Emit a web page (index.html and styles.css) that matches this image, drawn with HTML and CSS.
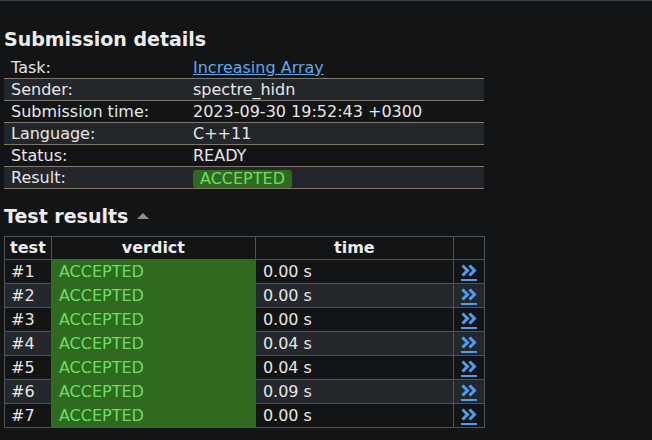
FILE: index.html
```html
<!DOCTYPE html>
<html>
<head>
<meta charset="utf-8">
<link rel="stylesheet" href="styles.css">
</head>
<body>
<div class="topline"></div>
<main class="content">
  <h2 class="heading">Submission details</h2>
  <table class="details">
    <tr><td class="label">Task:</td><td><a class="task-link" href="#">Increasing Array</a></td></tr>
    <tr><td class="label">Sender:</td><td>spectre_hidn</td></tr>
    <tr><td class="label">Submission time:</td><td>2023-09-30 19:52:43 +0300</td></tr>
    <tr><td class="label">Language:</td><td>C++11</td></tr>
    <tr><td class="label">Status:</td><td>READY</td></tr>
    <tr><td class="label">Result:</td><td><span class="badge">ACCEPTED</span></td></tr>
  </table>

  <h2 class="heading heading-tests">Test results <span class="caret"></span></h2>
  <table class="tests">
    <thead>
      <tr><th class="c-test">test</th><th class="c-verdict">verdict</th><th class="c-time">time</th><th class="c-link"></th></tr>
    </thead>
    <tbody>
      <tr><td>#1</td><td class="verdict">ACCEPTED</td><td>0.00 s</td><td class="link"><a href="#" class="more"><svg width="16" height="13" viewBox="0 0 16 13"><path d="M1.5 1.5 L6.5 6.5 L1.5 11.5 M8.5 1.5 L13.5 6.5 L8.5 11.5" fill="none" stroke="currentColor" stroke-width="3"/></svg></a></td></tr>
      <tr><td>#2</td><td class="verdict">ACCEPTED</td><td>0.00 s</td><td class="link"><a href="#" class="more"><svg width="16" height="13" viewBox="0 0 16 13"><path d="M1.5 1.5 L6.5 6.5 L1.5 11.5 M8.5 1.5 L13.5 6.5 L8.5 11.5" fill="none" stroke="currentColor" stroke-width="3"/></svg></a></td></tr>
      <tr><td>#3</td><td class="verdict">ACCEPTED</td><td>0.00 s</td><td class="link"><a href="#" class="more"><svg width="16" height="13" viewBox="0 0 16 13"><path d="M1.5 1.5 L6.5 6.5 L1.5 11.5 M8.5 1.5 L13.5 6.5 L8.5 11.5" fill="none" stroke="currentColor" stroke-width="3"/></svg></a></td></tr>
      <tr><td>#4</td><td class="verdict">ACCEPTED</td><td>0.04 s</td><td class="link"><a href="#" class="more"><svg width="16" height="13" viewBox="0 0 16 13"><path d="M1.5 1.5 L6.5 6.5 L1.5 11.5 M8.5 1.5 L13.5 6.5 L8.5 11.5" fill="none" stroke="currentColor" stroke-width="3"/></svg></a></td></tr>
      <tr><td>#5</td><td class="verdict">ACCEPTED</td><td>0.04 s</td><td class="link"><a href="#" class="more"><svg width="16" height="13" viewBox="0 0 16 13"><path d="M1.5 1.5 L6.5 6.5 L1.5 11.5 M8.5 1.5 L13.5 6.5 L8.5 11.5" fill="none" stroke="currentColor" stroke-width="3"/></svg></a></td></tr>
      <tr><td>#6</td><td class="verdict">ACCEPTED</td><td>0.09 s</td><td class="link"><a href="#" class="more"><svg width="16" height="13" viewBox="0 0 16 13"><path d="M1.5 1.5 L6.5 6.5 L1.5 11.5 M8.5 1.5 L13.5 6.5 L8.5 11.5" fill="none" stroke="currentColor" stroke-width="3"/></svg></a></td></tr>
      <tr><td>#7</td><td class="verdict">ACCEPTED</td><td>0.00 s</td><td class="link"><a href="#" class="more"><svg width="16" height="13" viewBox="0 0 16 13"><path d="M1.5 1.5 L6.5 6.5 L1.5 11.5 M8.5 1.5 L13.5 6.5 L8.5 11.5" fill="none" stroke="currentColor" stroke-width="3"/></svg></a></td></tr>
    </tbody>
  </table>
</main>
</body>
</html>
```

FILE: styles.css
```css
html, body {
  margin: 0;
  padding: 0;
  background: #131415;
  color: #e6e6e6;
  font-family: "DejaVu Sans", Verdana, sans-serif;
  font-size: 16px;
}

.topline {
  height: 1px;
  background: #3d4045;
}

.content {
  padding: 0 4px;
}

.heading {
  font-size: 19px;
  font-weight: bold;
  line-height: 23px;
  margin: 27px 0 6px 0;
  color: #ececec;
}

.details {
  width: 480px;
  border-collapse: collapse;
  border-spacing: 0;
}

.details td {
  padding: 0 7px;
  height: 21px;
  line-height: 21px;
  border-bottom: 1px solid #7f776b;
  white-space: nowrap;
}

.details td.label {
  width: 168px;
}

.details tr:nth-child(even) td {
  background: #23262a;
}

.task-link {
  color: #5ba9ef;
  text-decoration: underline;
}

.badge {
  display: inline-block;
  background: #2e6b1f;
  color: #6edc6a;
  border-radius: 3px;
  padding: 0 7px;
  line-height: 18px;
  vertical-align: middle;
}

.heading-tests {
  margin: 16px 0 8px 0;
}

.caret {
  display: inline-block;
  width: 0;
  height: 0;
  border-left: 6px solid transparent;
  border-right: 6px solid transparent;
  border-bottom: 6px solid #8d8d8d;
  vertical-align: middle;
  margin-left: 2px;
  position: relative;
  top: -2px;
}

.tests {
  width: 481px;
  border-collapse: collapse;
  border: 1px solid #4f5256;
}

.tests th, .tests td {
  border: 1px solid #4f5256;
  padding: 0 7px;
  white-space: nowrap;
}

.tests th {
  height: 22px;
  line-height: 22px;
  font-weight: bold;
  text-align: center;
  color: #ececec;
}

.tests td {
  height: 23px;
  line-height: 23px;
}

.tests tbody tr:nth-child(even) td {
  background: #24272b;
}

.c-test { width: 35px; }
.c-verdict { width: 188px; }
.c-time { width: 182px; }
.c-link { width: 16px; }

.tests td:first-child {
  padding: 0 6px;
}

.tests th.c-test {
  padding: 0 5px;
}

.tests td.verdict,
.tests tbody tr:nth-child(even) td.verdict {
  background: #2f6a1f;
  color: #6edc6a;
}

.tests td.link {
  text-align: center;
  padding: 0;
}

.more {
  display: inline-block;
  color: #4a9ff5;
  border-bottom: 2px solid #4a9ff5;
  line-height: 0;
  padding-bottom: 2px;
  vertical-align: middle;
}
```
